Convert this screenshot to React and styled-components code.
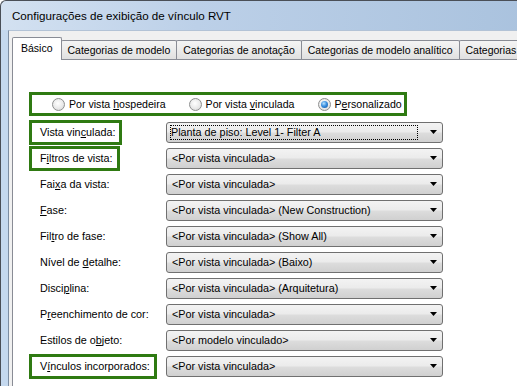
import React from "react";
import styled, { createGlobalStyle } from "styled-components";

const GlobalStyle = createGlobalStyle`
  html, body {
    margin: 0;
    padding: 0;
    width: 517px;
    height: 386px;
    overflow: hidden;
    background: #ffffff;
  }
  body {
    font-family: "Liberation Sans", Arial, sans-serif;
  }
`;

const GREEN = "#2f7a12";

const Window = styled.div`
  width: 560px;
  height: 400px;
  display: flex;
  flex-direction: column;
  border-top: 1px solid #4a4f57;
  border-left: 1px solid #4a4f57;
  border-top-left-radius: 6px;
  background: linear-gradient(90deg, #d3e1f1 0%, #bcd0e8 35%, #a8c1dd 100%);
  box-sizing: border-box;
`;

const TitleBar = styled.div`
  height: 29px;
  display: flex;
  align-items: center;
  padding-left: 11px;
  font-size: 11.6px;
  color: #000;
`;

const Frame = styled.div`
  flex: 1;
  display: flex;
  padding-left: 7px;
  background: #c5d9ef;
`;

const Body = styled.div`
  flex: 1;
  display: flex;
  flex-direction: column;
  background: #f0f0f0;
  border-left: 1px solid #7d8ea3;
  border-top: 1px solid #b3c3d6;
  padding: 5px 0 0 3px;
`;

const TabStrip = styled.div`
  display: flex;
  align-items: flex-end;
  height: 23px;
`;

const Tab = styled.div`
  position: relative;
  z-index: ${(p) => (p.$active ? 2 : 1)};
  height: ${(p) => (p.$active ? "23px" : "19px")};
  margin-bottom: ${(p) => (p.$active ? "-1px" : "0")};
  margin-left: ${(p) => (p.$active ? "0" : "-1px")};
  padding: ${(p) => (p.$active ? "0 8px 3px" : "0 6px")};
  display: flex;
  align-items: center;
  box-sizing: border-box;
  border: 1px solid #898c95;
  border-bottom: none;
  border-radius: 2px 2px 0 0;
  background: ${(p) =>
    p.$active ? "#ffffff" : "linear-gradient(#f4f4f4 0%, #ebebeb 50%, #e0e0e0 100%)"};
  font-size: 10.5px;
  white-space: nowrap;
  color: #000;
`;

const Panel = styled.div`
  flex: 1;
  background: #ffffff;
  border: 1px solid #898c95;
  padding: 32px 0 0 16px;
`;

const RadioGroup = styled.div`
  width: 378px;
  height: 24px;
  box-sizing: border-box;
  border: 3px solid ${GREEN};
  display: flex;
  align-items: center;
  gap: 23px;
  padding-left: 20px;
  margin-bottom: 3px;
`;

const RadioOption = styled.label`
  display: flex;
  align-items: center;
  gap: 4px;
  font-size: 10.6px;
  color: #000;
  white-space: nowrap;
`;

const RadioCircle = styled.span`
  position: relative;
  width: 13px;
  height: 13px;
  box-sizing: border-box;
  border-radius: 50%;
  border: 1px solid #8e8f8f;
  background: radial-gradient(circle at 45% 40%, #ffffff 0%, #e9e9e9 55%, #cfcfcf 100%);

  &::after {
    content: "";
    display: ${(p) => (p.$checked ? "block" : "none")};
    position: absolute;
    left: 2px;
    top: 2px;
    width: 7px;
    height: 7px;
    border-radius: 50%;
    background: radial-gradient(circle at 40% 35%, #b9e3fd 0%, #3a8fe0 45%, #0d4f99 100%);
  }
`;

const Form = styled.div`
  display: grid;
  grid-template-columns: 137px 277px;
  grid-auto-rows: 26px;
  align-items: center;
`;

const Label = styled.div`
  justify-self: start;
  height: 25px;
  box-sizing: border-box;
  display: flex;
  align-items: center;
  padding: 0 4px 0 8px;
  border: 3px solid ${(p) => (p.$highlight ? GREEN : "transparent")};
  font-size: 10.8px;
  color: #000;
  white-space: nowrap;
`;

const Combo = styled.div`
  height: 21px;
  box-sizing: border-box;
  display: flex;
  align-items: center;
  padding: 0 5px 0 3px;
  border: 1px solid #707070;
  border-radius: 3px;
  background: linear-gradient(#f3f3f3 0%, #ebebeb 48%, #dddddd 52%, #d0d0d0 100%);
  font-size: 10.8px;
  color: #000;
`;

const ComboValue = styled.span`
  flex: 1;
  height: 15px;
  display: flex;
  align-items: center;
  padding-left: ${(p) => (p.$focused ? "0" : "1px")};
  margin-right: 12px;
  box-sizing: border-box;
  border: 1px dotted ${(p) => (p.$focused ? "#000" : "transparent")};
  white-space: nowrap;
  overflow: hidden;
`;

const Arrow = () => (
  <svg width="7" height="4" viewBox="0 0 7 4">
    <polygon points="0,0 7,0 3.5,4" fill="#000" />
  </svg>
);

const Key = styled.u`
  text-decoration: underline;
  text-underline-offset: 1px;
`;

const M = ({ pre, k, post }) => (
  <span>
    {pre}
    <Key>{k}</Key>
    {post}
  </span>
);

const rows = [
  { label: <M pre="Vista vin" k="c" post="ulada:" />, value: "Planta de piso: Level 1- Filter A", highlight: true, focused: true },
  { label: <M pre="F" k="i" post="ltros de vista:" />, value: "<Por vista vinculada>", highlight: true },
  { label: <M pre="Fai" k="x" post="a da vista:" />, value: "<Por vista vinculada>" },
  { label: <M pre="" k="F" post="ase:" />, value: "<Por vista vinculada> (New Construction)" },
  { label: <M pre="Fil" k="t" post="ro de fase:" />, value: "<Por vista vinculada> (Show All)" },
  { label: <M pre="Nível de " k="d" post="etalhe:" />, value: "<Por vista vinculada> (Baixo)" },
  { label: <M pre="Disci" k="p" post="lina:" />, value: "<Por vista vinculada> (Arquitetura)" },
  { label: <M pre="P" k="r" post="eenchimento de cor:" />, value: "<Por vista vinculada>" },
  { label: <M pre="Estilos de o" k="b" post="jeto:" />, value: "<Por modelo vinculado>" },
  { label: <M pre="V" k="í" post="nculos incorporados:" />, value: "<Por vista vinculada>", highlight: true },
];

const tabs = [
  "Básico",
  "Categorias de modelo",
  "Categorias de anotação",
  "Categorias de modelo analítico",
  "Categorias importadas",
];

const App = () => {
  return (
    <>
      <GlobalStyle />
      <Window>
        <TitleBar>Configurações de exibição de vínculo RVT</TitleBar>
        <Frame>
          <Body>
            <TabStrip>
              {tabs.map((t, i) => (
                <Tab key={t} $active={i === 0}>
                  {t}
                </Tab>
              ))}
            </TabStrip>
            <Panel>
              <RadioGroup>
                <RadioOption>
                  <RadioCircle />
                  <M pre="Por vista " k="h" post="ospedeira" />
                </RadioOption>
                <RadioOption>
                  <RadioCircle />
                  <M pre="Por vista " k="v" post="inculada" />
                </RadioOption>
                <RadioOption>
                  <RadioCircle $checked />
                  <M pre="P" k="e" post="rsonalizado" />
                </RadioOption>
              </RadioGroup>
              <Form>
                {rows.map((r, i) => (
                  <React.Fragment key={i}>
                    <Label $highlight={r.highlight}>{r.label}</Label>
                    <Combo>
                      <ComboValue $focused={r.focused}>{r.value}</ComboValue>
                      <Arrow />
                    </Combo>
                  </React.Fragment>
                ))}
              </Form>
            </Panel>
          </Body>
        </Frame>
      </Window>
    </>
  );
};

export default App;
